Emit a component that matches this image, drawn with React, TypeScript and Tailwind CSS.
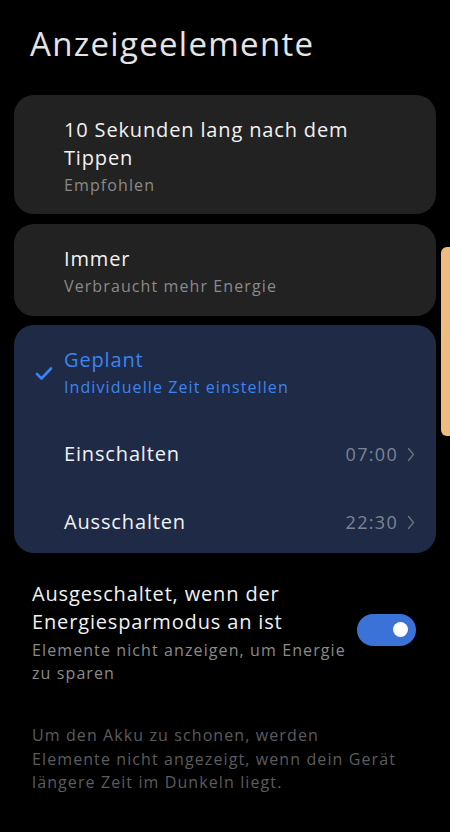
import React from "react";

const font = { fontFamily: "'Open Sans', Lato, sans-serif" };

const Chevron = () => (
  <svg width="8" height="15" viewBox="0 0 8 15" fill="none" className="ml-[9px]">
    <path d="M1.5 1.5L6.5 7.5L1.5 13.5" stroke="#6b7280" strokeWidth="1.3" strokeLinecap="round" strokeLinejoin="round" />
  </svg>
);

const Check = () => (
  <svg width="18" height="15" viewBox="0 0 18 15" fill="none">
    <path d="M2 8L6.5 12.5L16 2.5" stroke="#3b82f6" strokeWidth="2.6" strokeLinecap="round" strokeLinejoin="round" />
  </svg>
);

const TimeRow = ({ label, time }: { label: string; time: string }) => (
  <div className="flex items-center justify-between pl-[50px] pr-[21px] h-[68px]">
    <span className="text-[20px] tracking-[0.85px] text-[#f2f2f2]">{label}</span>
    <div className="flex items-center">
      <span className="text-[18px] tracking-[1.3px] text-[#7c8494]">{time}</span>
      <Chevron />
    </div>
  </div>
);

export default function App() {
  return (
    <div className="relative w-[450px] h-[832px] bg-black overflow-hidden" style={font}>
      <div className="pt-[22px] px-[30px] h-[95px]">
        <h1 className="text-[33px] leading-[44px] tracking-[1.3px] text-[#e4e4e4]">Anzeigeelemente</h1>
      </div>

      <div className="flex flex-col px-[14px]">
        <div className="rounded-[20px] bg-[#222222] pl-[50px] pr-4 pt-[21px] pb-[16px]">
          <div className="text-[20px] leading-[28px] tracking-[0.85px] text-[#f2f2f2]">
            10 Sekunden lang nach dem
            <br />
            Tippen
          </div>
          <div className="text-[16px] leading-[26px] tracking-[1.1px] text-[#8a8a8a]">Empfohlen</div>
        </div>

        <div className="mt-[10px] rounded-[20px] bg-[#222222] pl-[50px] pr-4 pt-[21px] pb-[17px]">
          <div className="text-[20px] leading-[28px] tracking-[0.85px] text-[#f2f2f2]">Immer</div>
          <div className="text-[16px] leading-[26px] tracking-[1.1px] text-[#8a8a8a]">Verbraucht mehr Energie</div>
        </div>

        <div className="mt-[9px] h-[228px] overflow-hidden rounded-[20px] bg-[#1f2b46] pt-[21px]">
          <div className="flex items-center pl-[21px] pr-4">
            <div className="w-[29px] flex items-center">
              <Check />
            </div>
            <div>
              <div className="text-[20px] leading-[28px] tracking-[0.85px] text-[#3d83f0]">Geplant</div>
              <div className="text-[16px] leading-[26px] tracking-[1.1px] text-[#3d83f0]">
                Individuelle Zeit einstellen
              </div>
            </div>
          </div>
          <div className="h-[20px]" />
          <TimeRow label="Einschalten" time="07:00" />
          <TimeRow label="Ausschalten" time="22:30" />
        </div>
      </div>

      <div className="flex items-center justify-between pl-[32px] pr-[34px] pt-[27px]">
        <div>
          <div className="text-[20px] leading-[28px] tracking-[0.85px] text-[#f2f2f2]">
            Ausgeschaltet, wenn der
            <br />
            Energiesparmodus an ist
          </div>
          <div className="text-[16px] leading-[23px] tracking-[1.1px] text-[#8a8a8a] mt-[3px]">
            Elemente nicht anzeigen, um Energie
            <br />
            zu sparen
          </div>
        </div>
        <div className="w-[59px] h-[32px] rounded-full bg-[#3a72d8] flex items-center justify-end pr-[8px] -mt-[6px]">
          <div className="w-[15px] h-[15px] rounded-full bg-white" />
        </div>
      </div>

      <div className="px-[32px] pt-[39px]">
        <p className="text-[16px] leading-[23.5px] tracking-[1.1px] text-[#5c5c5c]">
          Um den Akku zu schonen, werden
          <br />
          Elemente nicht angezeigt, wenn dein Gerät
          <br />
          längere Zeit im Dunkeln liegt.
        </p>
      </div>

      <div className="absolute right-0 top-[247px] w-[9px] h-[189px] rounded-l-[6px] bg-[#f0bb80]" />
    </div>
  );
}
